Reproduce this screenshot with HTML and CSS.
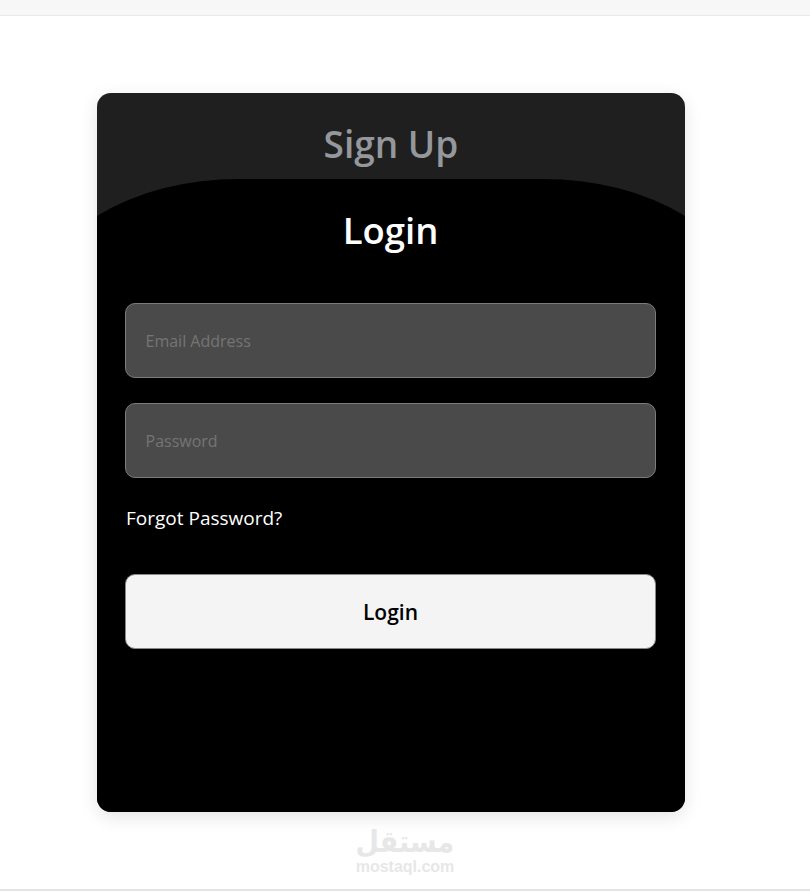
FILE: index.html
```html
<!DOCTYPE html>
<html lang="en">

<head>
    <meta charset="UTF-8">
    <meta name="viewport" content="width=device-width, initial-scale=1.0">
    <title>Login</title>
    <link rel="stylesheet" href="styles.css">
</head>

<body>
    <div class="top-bar"></div>

    <main class="page">
        <div class="card">
            <h2 class="signup-title">Sign Up</h2>

            <!-- Panel is wider than the card so the curve gets cut off at the sides -->
            <form class="login-panel">
                <h2 class="login-title">Login</h2>
                <input class="field" type="email" placeholder="Email Address">
                <input class="field" type="password" placeholder="Password">
                <a class="forgot" href="#">Forgot Password?</a>
                <button class="login-btn" type="button">Login</button>
            </form>
        </div>

        <div class="watermark">
            <span class="watermark-ar" lang="ar" dir="rtl">مستقل</span>
            <span class="watermark-en">mostaql.com</span>
        </div>
    </main>
</body>

</html>
```

FILE: styles.css
```css
body {
    font-family: "Open Sans", "Noto Sans", sans-serif;
    margin: 0;
    padding: 0;
    background: #fff;
    color: #000;
}

.top-bar {
    height: 15px;
    background: #f7f7f7;
    border-bottom: 1px solid #e9e9e9;
}

.page {
    height: 875px;
    box-sizing: border-box;
    border-bottom: 2px solid #e4e4e4;
    padding-top: 77px;
}

.card {
    width: 588px;
    height: 719px;
    margin-left: 97px;
    background: #1f1f1f;
    border-radius: 14px;
    box-shadow: 0 5px 18px rgba(0, 0, 0, 0.11);
    overflow: hidden;
}

.signup-title {
    height: 86px;
    margin: 0;
    padding-top: 26px;
    box-sizing: border-box;
    text-align: center;
    font-size: 37px;
    line-height: 50px;
    font-weight: 600;
    color: #94979b;
}

.login-panel {
    display: flex;
    flex-direction: column;
    height: 633px;
    box-sizing: border-box;
    margin: 0 -57px;
    padding: 0 86px 0 85px;
    background: #000;
    border-radius: 200px 200px 0 0 / 123px 123px 0 0;
}

.login-title {
    margin: 26px 0 48px;
    text-align: center;
    font-size: 36.5px;
    line-height: 50px;
    font-weight: 600;
    color: #fff;
}

.field {
    height: 75px;
    box-sizing: border-box;
    margin-bottom: 25px;
    padding: 0 19.5px;
    background: #4a4a4a;
    border: 1px solid #7c7c7c;
    border-radius: 10px;
    font-family: inherit;
    font-size: 16px;
    font-weight: 500;
    color: #fff;
}

.field::placeholder {
    color: #757575;
    opacity: 1;
}

.forgot {
    margin: 0 0 41px 1px;
    font-size: 19px;
    line-height: 30px;
    color: #fff;
    text-decoration: none;
}

.login-btn {
    height: 75px;
    background: #f4f4f4;
    border: 1px solid #888;
    border-radius: 10px;
    font-family: inherit;
    font-size: 21px;
    font-weight: 600;
    color: #000;
}

.watermark {
    display: flex;
    flex-direction: column;
    align-items: center;
    margin-top: 13px;
    color: #e7e7e7;
    font-weight: 700;
}

.watermark-ar {
    font-family: "DejaVu Sans", sans-serif;
    font-size: 30px;
    line-height: 34px;
    transform: scaleX(0.9);
}

.watermark-en {
    font-family: "Liberation Sans", sans-serif;
    font-size: 16px;
    line-height: 16px;
}
```
